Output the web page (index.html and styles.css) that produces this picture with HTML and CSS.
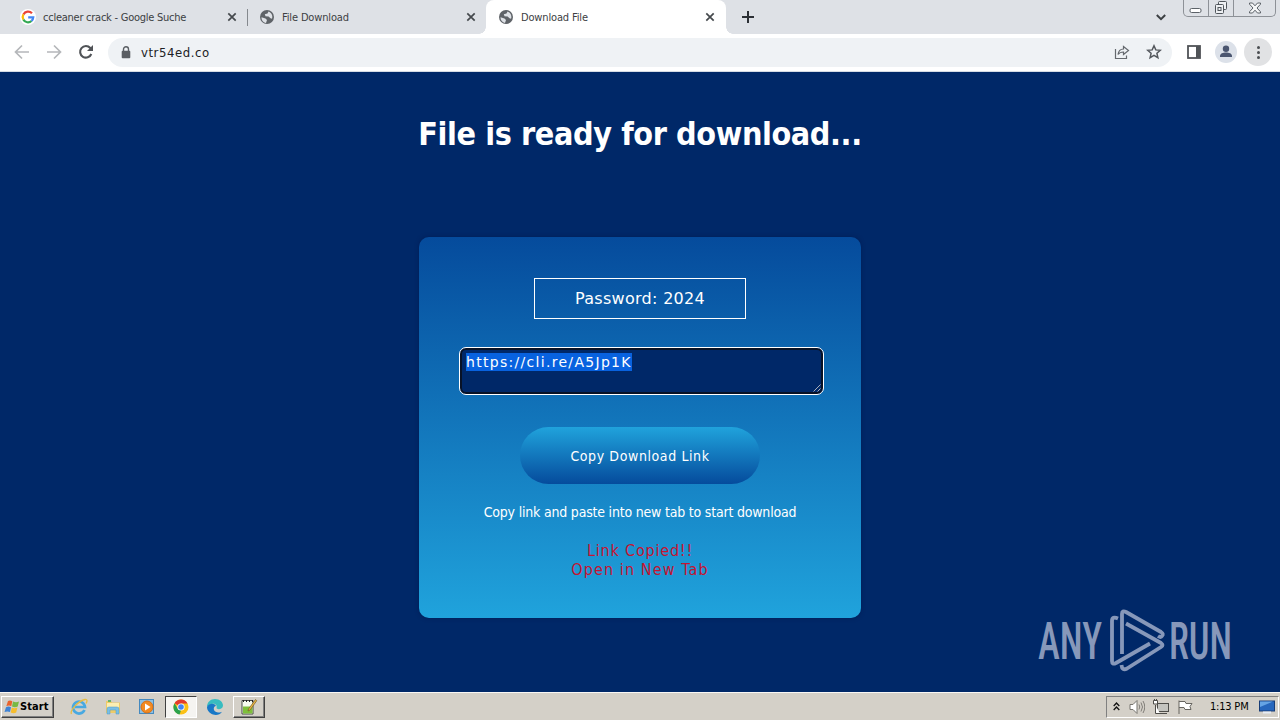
FILE: index.html
```
<!DOCTYPE html>
<html lang="en">

<head>
    <meta charset="UTF-8">
    <title>Download File</title>
    <link rel="stylesheet" href="styles.css">
</head>

<body>

    <!-- shared icons -->
    <svg class="defs" width="0" height="0">
        <symbol id="globe" viewBox="0 0 16 16">
            <circle cx="8" cy="8" r="7" fill="#5f6368" />
            <path d="M2.5 8.2 6.5 9.5 8 11l-1 3C4.2 13.6 2.3 11 2.5 8.200ZM9.500 2.400 8.500 4.500 5.800 5.200 6.500 7.300 9.600 7.500 11.500 9.300 13 9.800C14.200 7 12.500 3.500 9.500 2.400Z" fill="#dee1e6" />
        </symbol>
        <symbol id="close" viewBox="0 0 10 10">
            <path d="M1.300 1.300 8.700 8.700M8.700 1.300 1.300 8.700" stroke="#45494d" stroke-width="1.700" />
        </symbol>
    </svg>

    <header class="tabs">
        <div class="tab">
            <svg class="favicon" viewBox="0 0 16 16">
                <circle cx="8" cy="8" r="8" fill="#fff" />
                <g fill="none" stroke-width="2.200">
                    <path d="M12 4.300A5.300 5.300 0 0 0 3.400 5.400" stroke="#ea4335" />
                    <path d="M3.400 5.400a5.300 5.300 0 0 0 0 5.200" stroke="#fbbc05" />
                    <path d="M3.400 10.600A5.300 5.300 0 0 0 11.500 12" stroke="#34a853" />
                    <path d="M11.500 12A5.300 5.300 0 0 0 13.300 8.300H8.200" stroke="#4285f4" />
                </g>
            </svg>
            <span class="title search">ccleaner crack - Google Suche</span>
            <svg class="close"><use href="#close" /></svg>
        </div>
        <div class="tab divided">
            <svg class="favicon"><use href="#globe" /></svg>
            <span class="title">File Download</span>
            <svg class="close"><use href="#close" /></svg>
        </div>
        <div class="tab active">
            <svg class="favicon"><use href="#globe" /></svg>
            <span class="title">Download File</span>
            <svg class="close"><use href="#close" /></svg>
        </div>
        <svg class="plus" viewBox="0 0 12 12"><path d="M6 0v12M0 6h12" stroke="#2c3035" stroke-width="2" /></svg>
        <svg class="chevron" viewBox="0 0 10 7"><path d="m.8 1 4.200 4.200L9.200 1" fill="none" stroke="#3c4043" stroke-width="2" /></svg>
        <div class="window">
            <span><svg viewBox="0 0 14 14"><rect x="1" y="7.500" width="11" height="4" rx="1.500" fill="#fff" stroke="#5c6268" /></svg></span>
            <span><svg viewBox="0 0 14 14"><g fill="#eef0f3" stroke="#4f555b"><rect x="4.500" y=".5" width="8" height="8" rx="1" /><rect x="1.500" y="3.500" width="8" height="9" rx="1" /><rect x="4" y="6.500" width="3" height="3" /></g></svg></span>
            <span><svg viewBox="0 0 14 14"><path d="M1.500 2h3L7 4.800 9.500 2h3v1.200L9 7l3.500 3.800V12h-3L7 9.200 4.500 12h-3v-1.200L5 7 1.500 3.200Z" fill="#f6f7f8" stroke="#5c6268" /></svg></span>
        </div>
    </header>

    <nav class="toolbar">
        <svg class="nav-icon" viewBox="0 0 16 16"><path d="M15 8H2M8 1.500 1.500 8 8 14.500" fill="none" stroke="#b5b7ba" stroke-width="1.700" /></svg>
        <svg class="nav-icon" viewBox="0 0 16 16"><path d="M1 8h13M8 1.500 14.500 8 8 14.500" fill="none" stroke="#b5b7ba" stroke-width="1.700" /></svg>
        <svg class="nav-icon" viewBox="0 0 16 16"><path d="M13.300 10A5.800 5.800 0 1 1 12.300 4L14 5.500" fill="none" stroke="#505357" stroke-width="2.100" /><path d="M15 1v6H9Z" fill="#505357" /></svg>
        <div class="address">
            <svg class="lock" viewBox="0 0 10 13"><path d="M2.500 5V3.300a2.500 2.500 0 0 1 5 0V5" fill="none" stroke="#5a5e63" stroke-width="1.400" /><rect x=".7" y="4.700" width="8.600" height="7.500" rx="1" fill="#5a5e63" /></svg>
            <span class="url">vtr54ed.co</span>
            <svg class="share" viewBox="0 0 16 16"><path d="M1.500 5v9.500h11v-3M4 10.500C4.500 7 6.500 5 9.500 5V2.500L14.500 6.500 9.500 10.500V8C7 8 5.300 8.700 4 10.500Z" fill="none" stroke="#65696e" stroke-width="1.200" /></svg>
            <svg class="star" viewBox="0 0 16 16"><path d="m8 1.800 1.800 4.100 4.500.4-3.400 3 1 4.400L8 11.400l-3.900 2.300 1-4.400-3.400-3 4.500-.4Z" fill="none" stroke="#54585d" stroke-width="1.500" /></svg>
        </div>
        <svg class="panel" viewBox="0 0 14 14"><rect x="1" y="1" width="12" height="12" fill="none" stroke="#505357" stroke-width="1.800" /><path d="M9 1h4v12H9Z" fill="#505357" /></svg>
        <span class="round avatar"><svg viewBox="0 0 22 22"><circle cx="11" cy="7.700" r="3.200" fill="#4b5670" /><path d="M5 16v-1c0-2.500 3-3.500 6-3.500s6 1 6 3.500v1Z" fill="#4b5670" /></svg></span>
        <span class="round menu"><i></i><i></i><i></i></span>
    </nav>

    <main>
        <h1>File is ready for download...</h1>

        <section class="card">
            <div class="password">Password: 2024</div>
            <div class="link">
                <span>https://cli.re/A5Jp1K</span>
                <svg class="grip" viewBox="0 0 8 8"><path d="M.5 7.500 7.500.5M4.500 7.500l3-3" stroke="#a8adb8" /></svg>
            </div>
            <button>Copy Download Link</button>
            <p class="hint">Copy link and paste into new tab to start download</p>
            <p class="copied"><span>Link Copied!!</span><br>Open in New Tab</p>
        </section>

        <svg class="watermark" viewBox="0 0 230 85">
            <g font-family="Roboto, sans-serif" font-size="51" font-weight="500" fill="#8798ba">
                <text x="18" y="59" textLength="64" lengthAdjust="spacingAndGlyphs">ANY</text>
                <text x="149" y="59" textLength="63" lengthAdjust="spacingAndGlyphs">RUN</text>
            </g>
            <g fill="none" stroke="#8798ba" stroke-width="3.800" stroke-linejoin="round">
                <path d="M98 18.500Q92 16 92 21V61Q92 65 96 63L130 43.500" />
                <path d="M102 54V14Q102 10 106 12L141 32Q144 34 142 36Q141 38 138 36" />
                <path d="M106 23.500 141 43Q144 45 141 47L107 68.500Q102 71 101.500 65" />
            </g>
        </svg>
    </main>

    <footer class="taskbar">
        <div class="start">
            <svg viewBox="0 0 16 16">
                <path d="M4 2Q6 .8 8.300 2.200L7.300 7.200Q5 6 2.300 7.200Z" fill="#e9632c" />
                <path d="M9 2.500Q12 4 15 2.500L13.700 7.500Q11 9 8 7.500Z" fill="#78b943" />
                <path d="M2 8.200Q4.500 7 7 8.200L6 13Q3.500 11.800.5 13Z" fill="#3e83d5" />
                <path d="M7.800 8.600Q10.500 10 13.400 8.600L12.200 13.600Q9.500 15 6.700 13.500Z" fill="#f6bd2d" />
            </svg>
            Start
        </div>
        <div class="task">
            <svg viewBox="0 0 18 18">
                <path d="M14.500 12A6 6 0 1 1 15 9H5" fill="none" stroke="#48a9e1" stroke-width="2.700" />
                <path d="M1.500 16C-.5 13 8 3 15 1.500c3-.4 2 2.500 1 4" fill="none" stroke="#e7bc42" stroke-width="1.300" />
            </svg>
        </div>
        <div class="task">
            <svg viewBox="0 0 18 18">
                <path d="M2 3h5l1 1.500h8V15H2Z" fill="#eecb68" />
                <path d="M3 5h12v5H3Z" fill="#fbeeb2" /><path d="M4 2h3v2H4Z" fill="#65b368" />
                <path d="M3 16v-5q0-2 2-2h8q2 0 2 2v5h-3v-4H6v4Z" fill="#79bfe5" stroke="#4c98c6" stroke-width=".5" />
            </svg>
        </div>
        <div class="task">
            <svg viewBox="0 0 18 18">
                <rect x="1.500" y="1.500" width="14" height="14" fill="#8cc0e4" stroke="#4489bf" />
                <circle cx="9" cy="9" r="6" fill="#f38a20" stroke="#d96f12" /><path d="m7 5.500 5.500 3.500L7 12.500Z" fill="#fff" />
            </svg>
        </div>
        <div class="task pressed">
            <svg viewBox="0 0 18 18">
                <circle cx="9" cy="9" r="7.500" fill="#fbc116" />
                <path d="M9 9 2.500 5.200A7.500 7.500 0 0 1 15.500 5.500H9Z" fill="#e33b2e" />
                <path d="M2.500 5.200 6 11l3 1.500-1.500 4A7.500 7.500 0 0 1 2.500 5.200Z" fill="#2ba24c" />
                <circle cx="9" cy="9" r="3.600" fill="#fff" /><circle cx="9" cy="9" r="2.800" fill="#4285f4" />
            </svg>
        </div>
        <div class="task">
            <svg viewBox="0 0 18 18">
                <path d="M1 9C1 4 4.500 1 9 1c5 0 8 3.300 8 6.500 0 4-6 4.500-6.500 2.500C12 6 6 3.500 1 9Z" fill="#38bcc0" />
                <path d="M1 9C3 5 8.500 5 10 8c-3 0-3.500 6 2 6.500 2 .2 3.500-.5 4-.8C14 17 10 17.500 7 16.500 3.500 15.300 1 12.500 1 9Z" fill="#1878c7" />
            </svg>
        </div>
        <div class="task raised">
            <svg viewBox="0 0 18 18">
                <path d="M2 2.500h11V16H2Z" fill="#f6faee" stroke="#494949" /><path d="M3 8.500h9.500v7H3Z" fill="#7ebf3a" />
                <path d="M3 3h1M6 3h1M9 3h1M12 3h1" stroke="#222" stroke-width="2" /><path d="m15.500 1.500 1.300 1.200L10 12l-2 1 .5-2Z" fill="#edb844" stroke="#755b27" stroke-width=".7" />
            </svg>
        </div>

        <div class="tray">
            <svg class="expand" viewBox="0 0 7 9"><path d="m.7 4 2.800-3 2.800 3M.7 8l2.800-3 2.800 3" fill="none" stroke="#111" stroke-width="1.300" /></svg>
            <svg viewBox="0 0 16 16"><path d="M1 5.500h3L8 1.500v13l-4-4H1Z" fill="#fff" stroke="#77756f" /><path d="M10 5.500q1.500 2.500 0 5M12 3.500q3 4.500 0 9M14 2q3.500 6 0 12" fill="none" stroke="#77756f" stroke-width=".9" /></svg>
            <svg viewBox="0 0 16 16"><rect x="4.500" y="4.500" width="11" height="8" fill="#c4c4bf" stroke="#4e4d49" /><path d="M7 14.500h7M2.500 6v8.500H7M.5 1.500h4V5h-4ZM1.500 0v2M3.500 0v2" fill="#fff" stroke="#4e4d49" /></svg>
            <svg viewBox="0 0 16 16"><path d="M2 15V1.500M2 2.500h6l1 2h6l-2 3 1 3H8l-1-2H2" fill="#fff" stroke="#66645f" /></svg>
            <time>1:13 PM</time>
            <svg class="desktop" viewBox="0 0 16 16"><rect x=".5" y="2" width="15" height="10" fill="#2767bd" stroke="#183d77" /><path d="M1 2.500h13L1 8Z" fill="#65a4e5" /><path d="M4 13.500h8" stroke="#e7edf5" stroke-width="2" /></svg>
        </div>
    </footer>

</body>

</html>
```
FILE: styles.css
```
* {
    box-sizing: border-box;
}

body {
    margin: 0;
    width: 1280px;
    height: 720px;
    overflow: hidden;
    display: flex;
    flex-direction: column;
    font-family: "DejaVu Sans Condensed", "DejaVu Sans", sans-serif;
    font-stretch: condensed;
}

svg {
    display: block;
    flex: none;
}

.defs {
    position: absolute;
}

/* Tab strip */
.tabs {
    height: 34px;
    background: #dee1e6;
    display: flex;
    align-items: flex-start;
    flex: none;
}

.tab {
    width: 239px;
    height: 34px;
    display: flex;
    align-items: center;
    padding-left: 20px;
    font-size: 11px;
    color: #3c4043;

    &:first-child {
        width: 240px;
    }

    &.divided {
        width: 246px;
        background: linear-gradient(#85898e, #85898e) 7px 9px / 1px 17px no-repeat;
        padding: 0 7px 0 19px;
    }

    &.active {
        position: relative;
        width: 240px;
        background: #fff;
        border-radius: 8px 8px 0 0;
        padding-left: 12px;
    }

    /* flared feet of the active tab */
    &.active::before,
    &.active::after {
        content: "";
        position: absolute;
        bottom: 0;
        width: 7px;
        height: 7px;
    }

    &.active::before {
        left: -7px;
        background: radial-gradient(circle at 0 0, transparent 6.5px, #fff 7px);
    }

    &.active::after {
        right: -7px;
        background: radial-gradient(circle at 100% 0, transparent 6.5px, #fff 7px);
    }
}

.favicon {
    width: 16px;
    height: 16px;
    margin-right: 7px;
}

.title {
    flex: 1;
    white-space: nowrap;
    letter-spacing: -0.15px;

    &.search {
        letter-spacing: -0.25px;
    }
}

.close {
    width: 10px;
    height: 10px;
    margin-right: 3px;
}

.active .close {
    margin-right: 11px;
}

.plus {
    width: 12px;
    height: 12px;
    margin: 11px 0 0 16px;
}

.chevron {
    width: 10px;
    height: 7px;
    margin: 14px 17px 0 auto;
}

.window {
    display: flex;
    width: 93px;
    height: 17px;
    margin-right: 4px;
    border: 1px solid #8d9197;
    border-top: 0;
    border-radius: 0 0 5px 5px;

    span {
        display: flex;
        justify-content: center;
        width: 25px;
        border-right: 1px solid #8d9197;

        &:last-child {
            flex: 1;
            border: 0;
        }
    }

    svg {
        width: 14px;
        height: 14px;
        margin-top: 1px;
    }
}

/* Toolbar */
.toolbar {
    height: 38px;
    flex: none;
    display: flex;
    align-items: center;
    padding: 0 8px 1px 14px;
    background: #fff;
    border-bottom: 1px solid #d5dbe4;
}

.nav-icon {
    width: 16px;
    height: 16px;
    margin-right: 16px;
}

.address {
    width: 1064px;
    height: 29px;
    margin-left: -2px;
    display: flex;
    align-items: center;
    border-radius: 15px;
    background: #eff2f5;
    padding: 0 10px 0 13px;
}

.lock {
    width: 10px;
    height: 13px;
}

.url {
    flex: 1;
    margin-left: 10px;
    font-size: 13px;
    letter-spacing: 0.55px;
    color: #202124;
}

.share,
.star {
    width: 16px;
    height: 16px;
    margin-left: 16px;
}

.panel {
    width: 14px;
    height: 14px;
    margin-left: 15px;
}

.round {
    display: flex;
    border-radius: 50%;
}

.avatar {
    width: 22px;
    height: 22px;
    margin-left: 14px;
    background: #dce1e9;

    svg {
        width: 22px;
    }
}

.menu {
    width: 28px;
    height: 28px;
    margin-left: auto;
    background: #e1e2e4;
    flex-direction: column;
    align-items: center;
    justify-content: center;
    gap: 2px;

    i {
        width: 3px;
        height: 3px;
        background: #4a4d51;
        border-radius: 50%;
    }
}

/* Page */
main {
    flex: 1;
    position: relative;
    display: flex;
    flex-direction: column;
    align-items: center;
    background: #002868;
    color: #fff;
}

h1 {
    margin: 42px 0 0;
    height: 40px;
    font-size: 32px;
    line-height: 40px;
    letter-spacing: -0.4px;
    white-space: nowrap;
}

.card {
    width: 442px;
    height: 381px;
    margin: 83px 0 0;
    padding-top: 41px;
    display: flex;
    flex-direction: column;
    align-items: center;
    border-radius: 10px;
    background: linear-gradient(#054b9c, #20a3dc);
    box-shadow: 0 0 4px rgba(0, 20, 70, 0.5);
}

.password {
    width: 212px;
    height: 41px;
    border: 1px solid #fff;
    font-family: "DejaVu Sans", sans-serif;
    font-stretch: normal;
    font-size: 16px;
    line-height: 40px;
    letter-spacing: 0.3px;
    text-align: center;
}

.link {
    position: relative;
    width: 365px;
    height: 48px;
    margin: 28px 0 0 3px;
    padding: 5px 6px;
    border: 1px solid #fff;
    border-radius: 7px;
    background: #002868;
    box-shadow: inset 0 0 0 2px #081226;
    font-family: "DejaVu Sans", sans-serif;
    font-stretch: normal;
    font-size: 14px;
    letter-spacing: 1.3px;

    span {
        display: inline-block;
        height: 18px;
        line-height: 19px;
        background: #0862df;
    }
}

.grip {
    position: absolute;
    right: 2px;
    bottom: 2px;
    width: 8px;
    height: 8px;
}

button {
    width: 240px;
    height: 57px;
    margin: 32px 0 0;
    padding: 0;
    border: 0;
    border-radius: 29px;
    background: linear-gradient(#20a3dc, #054b9c);
    color: #fff;
    font: inherit;
    font-size: 14px;
    letter-spacing: 0.6px;
}

.hint {
    margin: 18px 0 0;
    font-size: 14px;
    line-height: 20px;
    white-space: nowrap;
    letter-spacing: -0.2px;
}

.copied {
    margin: 19px 0 0;
    font-size: 16px;
    line-height: 19px;
    letter-spacing: 1.1px;
    text-align: center;
    color: #c41432;

    span {
        letter-spacing: 0.8px;
    }
}

.watermark {
    position: absolute;
    left: 1020px;
    top: 528px;
    width: 230px;
    height: 85px;
}

/* Taskbar */
.taskbar {
    height: 28px;
    flex: none;
    display: flex;
    align-items: center;
    padding: 0 0 0 1px;
    background: #d4d0c8;
    border-top: 1px solid #f8f7f5;
}

.start,
.raised {
    border: 1px solid;
    border-color: #fff #404040 #404040 #fff;
    box-shadow: inset -1px -1px #808080;
}

.start {
    width: 53px;
    height: 22px;
    display: flex;
    align-items: center;
    margin-right: 9px;
    padding-left: 2px;
    font-size: 11px;
    font-weight: bold;
    letter-spacing: 0.1px;

    svg {
        width: 16px;
        height: 16px;
    }
}

.task {
    width: 32px;
    height: 22px;
    margin-right: 2px;
    display: flex;
    align-items: center;
    justify-content: center;

    svg {
        width: 18px;
        height: 18px;
    }
}

.pressed {
    background: #f5f4f1;
    border: 1px solid;
    border-color: #404040 #fff #fff #404040;
}

.tray {
    width: 173px;
    height: 22px;
    margin: 0 1px 0 auto;
    display: flex;
    align-items: center;
    border: 1px solid;
    border-color: #808080 #fff #fff #808080;
    padding-left: 6px;
    font-size: 11px;

    svg {
        width: 16px;
        height: 16px;
        margin-right: 8px;
    }

    .expand {
        width: 7px;
        height: 9px;
        margin-right: 9px;
    }

    time {
        margin-left: 9px;
        letter-spacing: -0.2px;
    }

    .desktop {
        margin: 0 3px 0 auto;
    }
}
```
